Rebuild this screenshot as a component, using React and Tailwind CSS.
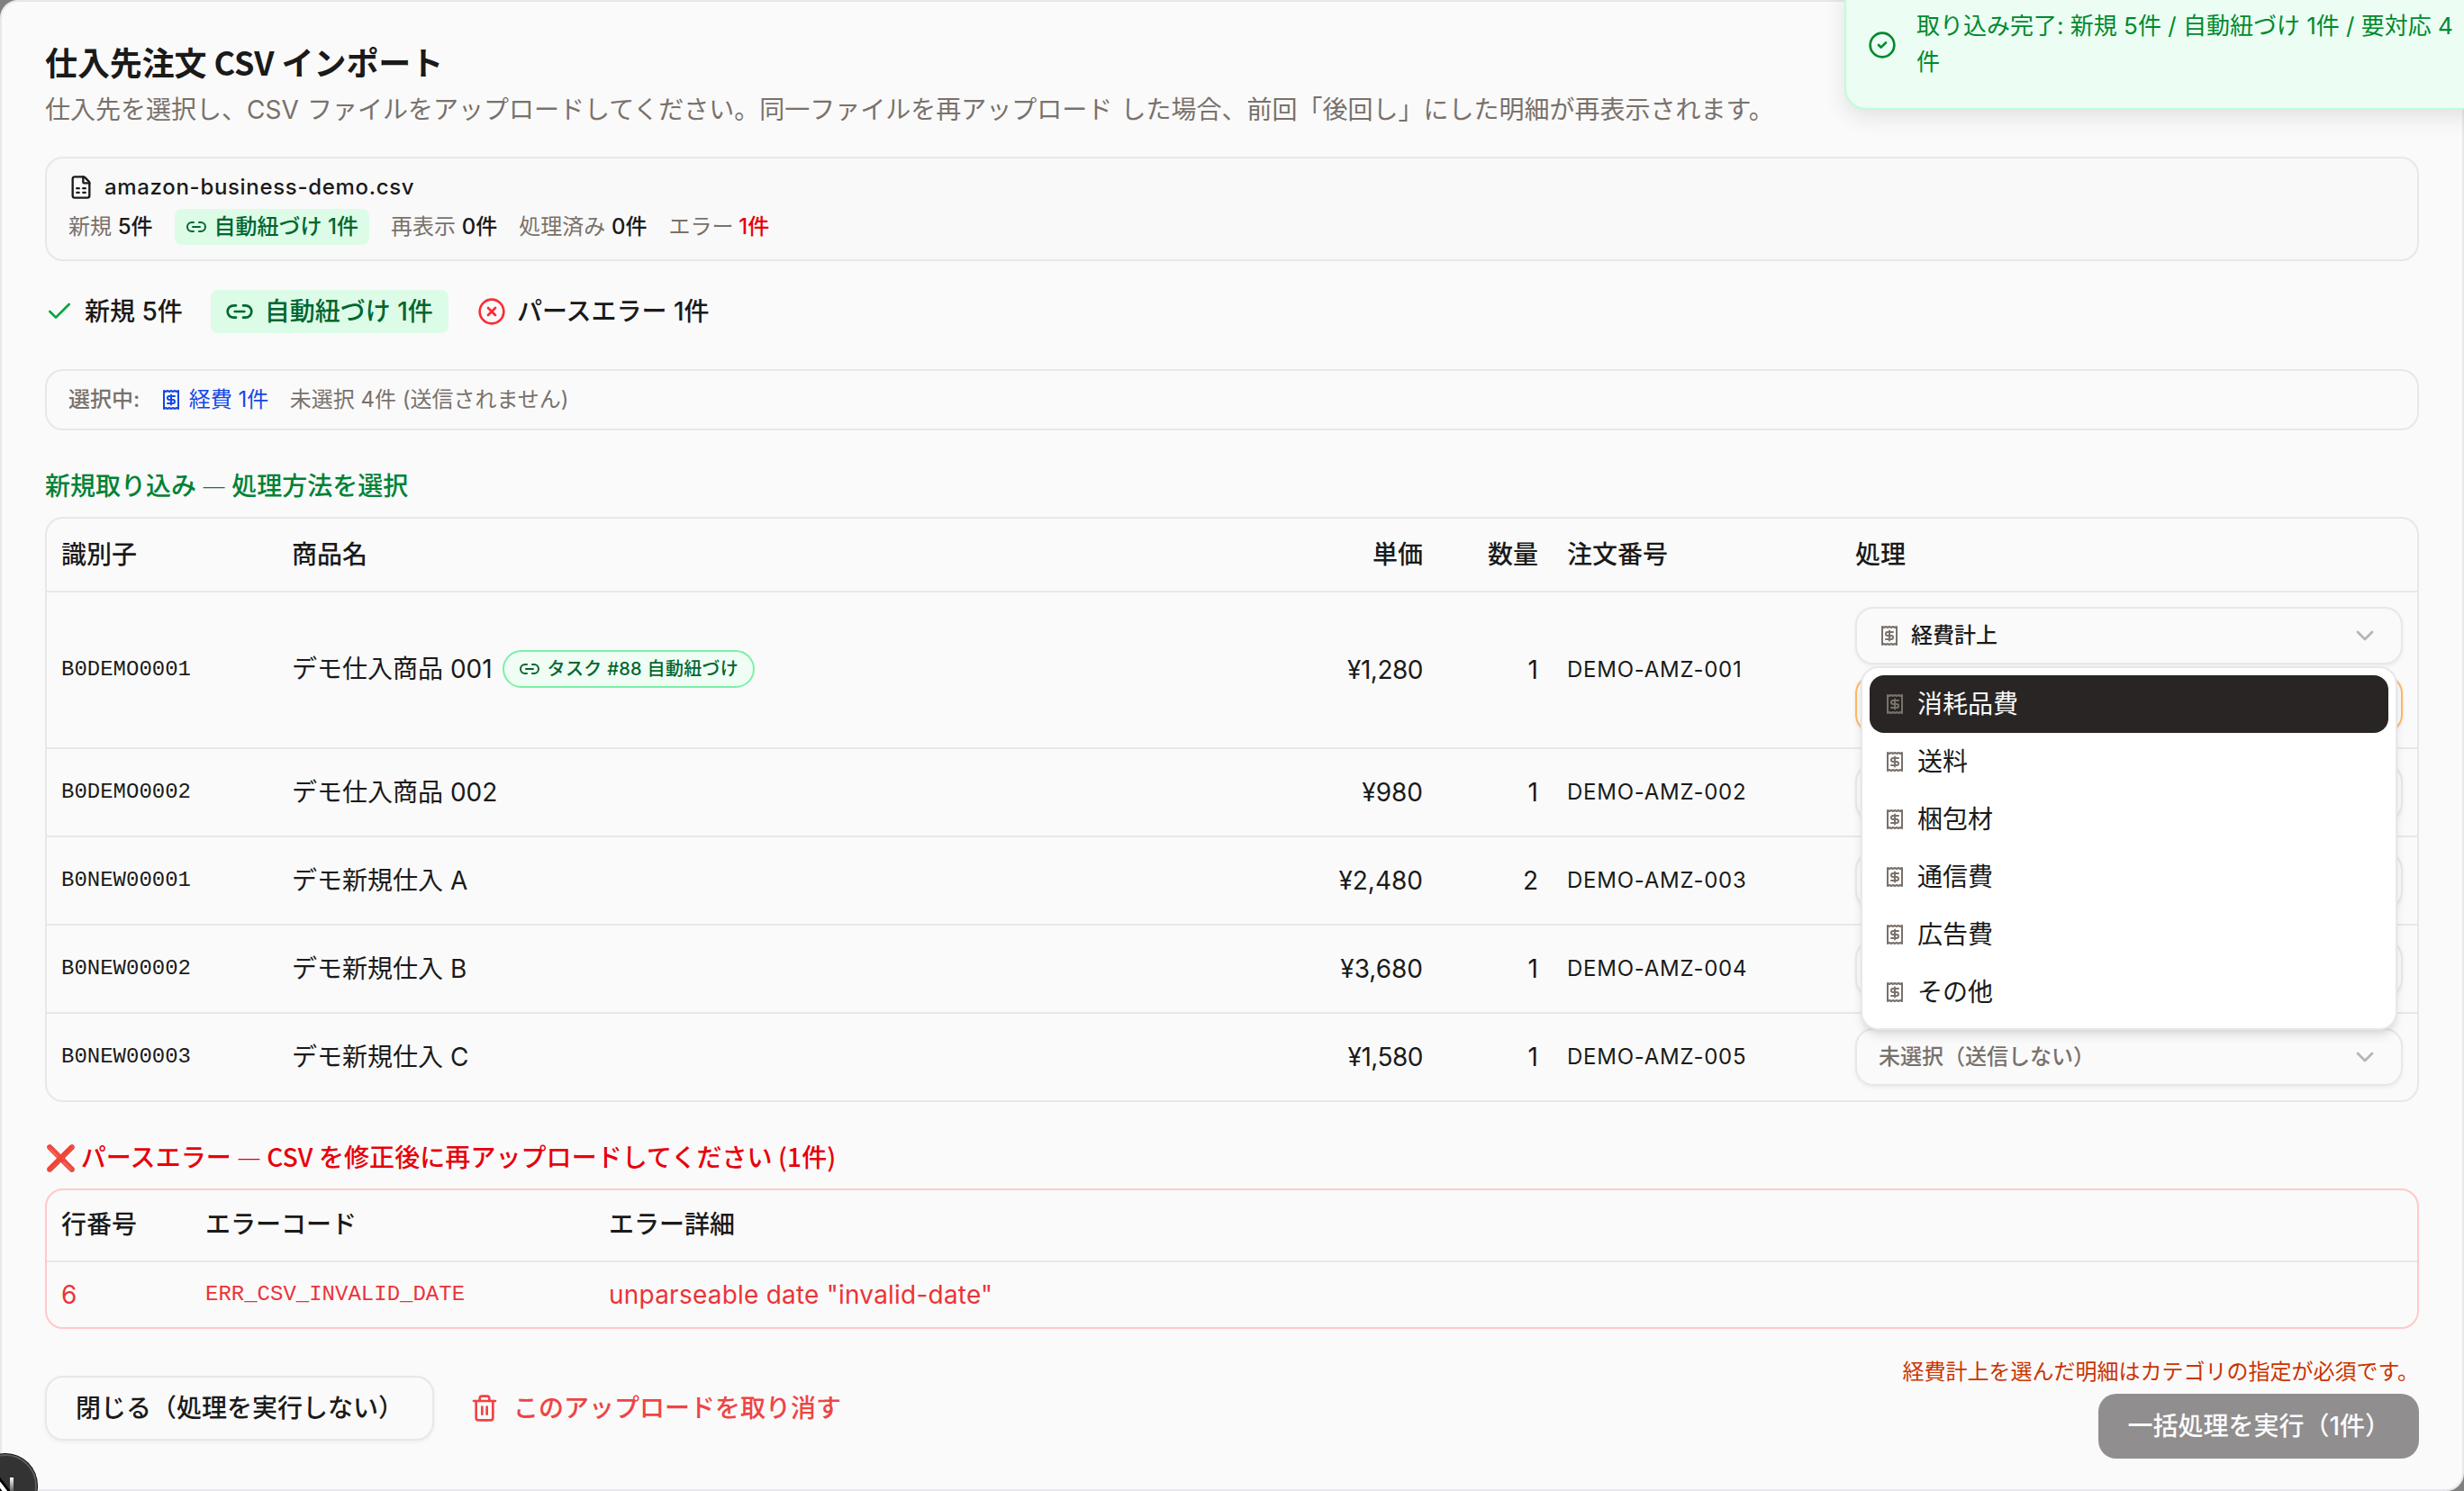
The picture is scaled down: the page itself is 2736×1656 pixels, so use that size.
import {
  Check,
  ChevronDown,
  CircleCheck,
  CircleX,
  FileSpreadsheet,
  Link2,
  Receipt,
  Trash2,
} from 'lucide-react'

const ITEMS = [
  { id: 'B0DEMO0001', name: 'デモ仕入商品 001', price: '¥1,280', qty: 1, order: 'DEMO-AMZ-001', task: 88, action: 'expense' },
  { id: 'B0DEMO0002', name: 'デモ仕入商品 002', price: '¥980', qty: 1, order: 'DEMO-AMZ-002' },
  { id: 'B0NEW00001', name: 'デモ新規仕入 A', price: '¥2,480', qty: 2, order: 'DEMO-AMZ-003' },
  { id: 'B0NEW00002', name: 'デモ新規仕入 B', price: '¥3,680', qty: 1, order: 'DEMO-AMZ-004' },
  { id: 'B0NEW00003', name: 'デモ新規仕入 C', price: '¥1,580', qty: 1, order: 'DEMO-AMZ-005', placeholder: '未選択（送信しない）' },
]

const CATEGORIES = ['消耗品費', '送料', '梱包材', '通信費', '広告費', 'その他']

function SelectTrigger({ children, className = 'border-[#e7e7ec]' }) {
  return (
    <button
      className={`flex h-16 w-full items-center justify-between rounded-[20px] border-2 px-6 text-[24px] font-medium leading-8 shadow-[0_2px_4px_0_rgb(0_0_0/0.06)] ${className}`}
    >
      <span className="flex items-center gap-3">{children}</span>
      <ChevronDown className="size-8 text-[#1c1917] opacity-30" />
    </button>
  )
}

function CategoryMenu() {
  return (
    <ul className="absolute left-[6px] top-[66px] z-10 w-[596px] rounded-[20px] border-2 border-[#e7e7ec] bg-white p-2 shadow-[0_8px_12px_-2px_rgb(0_0_0/0.1),0_4px_8px_-4px_rgb(0_0_0/0.1)]">
      {CATEGORIES.map((label, i) => (
        <li
          key={label}
          className={`flex h-16 items-center gap-[13px] rounded-[16px] px-4 text-[28px] leading-10 ${
            i === 0 ? 'bg-[#292524] text-[#fafafa]' : 'text-[#1a1a1a]'
          }`}
        >
          <Receipt className="size-6 text-[#79716b]" />
          {label}
        </li>
      ))}
    </ul>
  )
}

function FileCard() {
  return (
    <section className="mt-8 rounded-[20px] border-2 border-[#e7e7ec] bg-[#f9f9f9] px-6 py-4">
      <div className="flex h-8 items-center gap-3 text-[24px] font-medium leading-8">
        <FileSpreadsheet className="size-7" />
        <span className="tracking-[0.68px]">amazon-business-demo.csv</span>
      </div>
      <div className="mt-2 flex h-10 items-center gap-6 text-[24px] leading-8 text-[#79716b]">
        <span>
          新規 <span className="font-medium text-[#1a1a1a]">5件</span>
        </span>
        <span className="flex h-10 items-center gap-2 rounded-lg bg-[#dcfce7] px-3 font-medium text-[#016630]">
          <Link2 className="size-6" />
          自動紐づけ 1件
        </span>
        <span>
          再表示 <span className="font-medium text-[#1a1a1a]">0件</span>
        </span>
        <span>
          処理済み <span className="font-medium text-[#1a1a1a]">0件</span>
        </span>
        <span>
          エラー <span className="-ml-px font-medium text-[#e7000b]">1件</span>
        </span>
      </div>
    </section>
  )
}

function ItemsTable() {
  return (
    <div className="mt-4 rounded-[20px] border-2 border-[#e7e7ec]">
      <table className="w-full table-fixed border-separate border-spacing-0 text-left">
        <colgroup>
          <col className="w-[256px]" />
          <col />
          <col className="w-[200px]" />
          <col className="w-[128px]" />
          <col className="w-[320px]" />
          <col className="w-[640px]" />
        </colgroup>
        <thead>
          <tr className="[&>th]:h-[82px] [&>th]:border-b-2 [&>th]:border-[#e7e7ec] [&>th]:px-4 [&>th]:font-medium">
            <th>識別子</th>
            <th>商品名</th>
            <th className="text-right">単価</th>
            <th className="text-right">数量</th>
            <th>注文番号</th>
            <th>処理</th>
          </tr>
        </thead>
        <tbody className="[&>tr:last-child>td]:border-b-0 [&>tr>td]:border-b-2 [&>tr>td]:border-[#e7e7ec] [&>tr>td]:px-4 [&>tr>td]:py-4">
          {ITEMS.map((item) => (
            <tr key={item.id}>
              <td className="font-['Liberation_Mono',monospace] text-[24px] leading-8">{item.id}</td>
              <td>
                <div className={`flex items-center ${item.task ? 'mb-[2px]' : ''}`}>
                  {item.name}
                  {item.task && (
                    <span className="ml-[11px] inline-flex h-[42px] items-center gap-2 rounded-full border-2 border-[#7bf1a8] bg-[#f0fdf4] px-4 text-[20px] font-medium leading-[30px] tracking-[0.3px] text-[#016630]">
                      <Link2 className="size-6" />
                      タスク #{item.task} 自動紐づけ
                    </span>
                  )}
                </div>
              </td>
              <td className={`text-right ${item.price.startsWith('¥1') ? 'tracking-[-0.5px]' : ''}`}>
                {item.price}
              </td>
              <td className="text-right">{item.qty}</td>
              <td className="text-[24px] leading-8 tracking-[0.75px]">{item.order}</td>
              <td>
                {item.action === 'expense' ? (
                  <div className="relative flex flex-col gap-3">
                    <SelectTrigger>
                      <Receipt className="size-6 text-[#79716b]" />
                      経費計上
                    </SelectTrigger>
                    <SelectTrigger className="border-[#ffb86a]" />
                    <CategoryMenu />
                  </div>
                ) : (
                  <SelectTrigger className="border-[#e7e7ec] text-[#79716b]">
                    {item.placeholder}
                  </SelectTrigger>
                )}
              </td>
            </tr>
          ))}
        </tbody>
      </table>
    </div>
  )
}

function ErrorTable() {
  return (
    <div className="mt-4 rounded-[20px] border-2 border-[#ffc9c9]">
      <table className="w-full table-fixed border-separate border-spacing-0 text-left">
        <colgroup>
          <col className="w-[160px]" />
          <col className="w-[448px]" />
          <col />
        </colgroup>
        <thead>
          <tr className="[&>th]:h-20 [&>th]:border-b-2 [&>th]:border-[#e7e7ec] [&>th]:px-4 [&>th]:pb-[2px] [&>th]:font-medium">
            <th>行番号</th>
            <th>エラーコード</th>
            <th>エラー詳細</th>
          </tr>
        </thead>
        <tbody>
          <tr className="text-[#ec3338] [&>td]:h-[72px] [&>td]:px-4">
            <td>6</td>
            <td className="font-['Liberation_Mono',monospace] text-[24px] leading-8">ERR_CSV_INVALID_DATE</td>
            <td className="tracking-[0.22px]">unparseable date "invalid-date"</td>
          </tr>
        </tbody>
      </table>
    </div>
  )
}

function Toast() {
  return (
    <div className="absolute left-[2048px] top-[-26px] z-20 flex h-[148px] w-[712px] items-center rounded-[24px] border-2 border-[#bffcd9] bg-[#ecfdf3] pl-6 text-[#008a2e] shadow-[0_8px_24px_rgb(0_0_0/0.1)]">
      <CircleCheck className="mt-1 size-8 shrink-0" />
      <p className="ml-[22px] mt-px text-[26px] leading-10">
        取り込み完了: 新規 5件 / 自動紐づけ 1件 / 要対応 4<br />件
      </p>
    </div>
  )
}

function DevBadge() {
  return (
    <svg className="absolute -left-[30px] top-[1614px] z-20" width="72" height="72" viewBox="0 0 72 72">
      <defs>
        <linearGradient id="bar" x1="0" y1="0" x2="0" y2="1">
          <stop offset="0" stopColor="#fff" />
          <stop offset="0.9" stopColor="#fff" stopOpacity="0" />
        </linearGradient>
      </defs>
      <circle cx="36" cy="36" r="36" fill="#0a0a0a" />
      <circle cx="36" cy="36" r="34" fill="#333" stroke="#5c5c5c" strokeWidth="2" />
      <path d="M20 22 L43 52" stroke="#000" strokeWidth="10" />
      <path d="M20 22 L43 52" stroke="#fff" strokeWidth="4.5" />
      <rect x="41" y="27" width="4" height="22" fill="url(#bar)" />
    </svg>
  )
}

export default function App() {
  return (
    <div className="relative h-[1656px] w-[2736px] overflow-hidden bg-[#808080] font-['Inter','Noto_Sans_CJK_JP',sans-serif] text-[28px] leading-10 text-[#1a1a1a]">
      <main className="h-full rounded-[20px] border-2 border-[#e7e7ec] bg-[#fafafa] p-12">
        <h2 className="h-10 font-['Noto_Sans_CJK_JP',sans-serif] text-[36px] font-semibold leading-[37px] tracking-[-0.1px]">
          仕入先注文 CSV インポート
        </h2>
        <p className="mt-3 text-[#79716b] [word-spacing:1.4px]">
          仕入先を選択し、CSV ファイルをアップロードしてください。同一ファイルを再アップロード
          した場合、前回「後回し」にした明細が再表示されます。
        </p>

        <FileCard />

        <div className="mt-8 flex h-12 items-center gap-8 font-medium">
          <span className="-mr-px flex items-center gap-3">
            <Check className="size-8 text-[#00a63e]" />
            新規 5件
          </span>
          <span className="flex h-12 items-center gap-3 rounded-lg bg-[#dcfce7] pl-4 pr-[17px] text-[#016630]">
            <Link2 className="size-8" />
            自動紐づけ 1件
          </span>
          <span className="flex items-center gap-3">
            <CircleX className="size-8 text-[#fb2c36]" />
            パースエラー 1件
          </span>
        </div>

        <div className="mt-10 flex h-[68px] items-center gap-[22.5px] rounded-[20px] border-2 border-[#e7e7ec] px-6 text-[24px] leading-8 text-[#79716b]">
          <span className="font-medium">選択中:</span>
          <span className="flex items-center gap-2 text-[#1447e6]">
            <Receipt className="size-6" />
            経費 1件
          </span>
          <span className="ml-px">未選択 4件 (送信されません)</span>
        </div>

        <h3 className="mt-10 font-['Noto_Sans_CJK_JP',sans-serif] font-medium text-[#008236]">
          新規取り込み <span className="text-[30px] font-light leading-none">—</span> 処理方法を選択
        </h3>
        <ItemsTable />

        <h3 className="mt-10 font-['Noto_Sans_CJK_JP',sans-serif] font-medium tracking-[0.08px] text-[#e7000b]">
          <span className="tracking-[-1.6px]">❌</span> パースエラー{' '}
          <span className="text-[30px] font-light leading-none">—</span> CSV を修正後に再アップロードしてください (1件)
        </h3>
        <ErrorTable />

        <footer className="mt-8 flex h-28 items-center justify-between">
          <div className="flex items-center gap-4 font-medium">
            <button className="h-[72px] rounded-[20px] border-2 border-[#e7e7ec] px-8 shadow-[0_2px_4px_0_rgb(0_0_0/0.05)]">
              閉じる（処理を実行しない）
            </button>
            <button className="flex h-[72px] items-center gap-4 px-6 text-[#ef4444]">
              <Trash2 className="size-8" />
              このアップロードを取り消す
            </button>
          </div>
          <div className="flex flex-col items-end gap-2">
            <p className="text-[24px] leading-8 text-[#ca3500]">
              経費計上を選んだ明細はカテゴリの指定が必須です。
            </p>
            <button className="h-[72px] rounded-[20px] bg-[#908e8e] px-8 font-medium text-[#fcfcfc]">
              一括処理を実行（1件）
            </button>
          </div>
        </footer>
      </main>

      <Toast />
      <DevBadge />
    </div>
  )
}
